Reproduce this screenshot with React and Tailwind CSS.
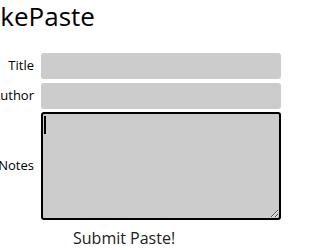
import React from "react";

export default function App() {
  return (
    <div className="w-[294px] h-[250px] overflow-hidden bg-white font-['Open_Sans',sans-serif] text-black">
      <h1 className="-ml-[31px] pt-0 text-[26px] leading-[32px] font-normal">PokePaste</h1>
      <form className="mt-[21px] grid grid-cols-[75px_240px] gap-x-[7px] -ml-[41px]">
        <label className="text-right text-[13px] self-center">Title</label>
        <input className="h-[26px] rounded-[3px] bg-[#cccccc] outline-none" />
        <label className="text-right text-[13px] self-center mt-[4px]">Author</label>
        <input className="h-[26px] mt-[4px] rounded-[3px] bg-[#cccccc] outline-none" />
        <label className="text-right text-[13px] self-center mt-[3px]">Notes</label>
        <div className="relative mt-[3px]">
          <textarea className="block w-full h-[108px] rounded-[3px] border-2 border-black bg-[#cccccc] outline-none" />
          <span className="absolute left-[3px] top-[4px] w-[2px] h-[18px] bg-black" />
        </div>
        <div />
        <div className="flex mt-[8px]">
          <button type="button" className="ml-[32px] text-[16px] text-[#222] leading-[20px]">Submit Paste!</button>
        </div>
      </form>
    </div>
  );
}
